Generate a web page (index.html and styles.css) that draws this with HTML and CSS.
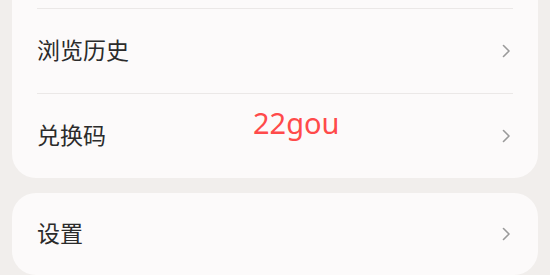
FILE: index.html
```html
<!DOCTYPE html>
<html lang="zh-CN">
<head>
<meta charset="utf-8">
<link rel="stylesheet" href="styles.css">
</head>
<body>
<div class="page">
  <div class="card card-top">
    <div class="row row-hidden"></div>
    <div class="divider"></div>
    <div class="row">
      <span class="label">浏览历史</span>
      <svg class="chev" viewBox="0 0 10 14" width="10" height="14"><path d="M2.5 1.5 L8 7 L2.5 12.5" fill="none" stroke="#9a9a9a" stroke-width="1.6" stroke-linecap="round" stroke-linejoin="round"/></svg>
    </div>
    <div class="divider"></div>
    <div class="row">
      <span class="label">兑换码</span>
      <svg class="chev" viewBox="0 0 10 14" width="10" height="14"><path d="M2.5 1.5 L8 7 L2.5 12.5" fill="none" stroke="#9a9a9a" stroke-width="1.6" stroke-linecap="round" stroke-linejoin="round"/></svg>
    </div>
  </div>
  <div class="card">
    <div class="row row-short">
      <span class="label">设置</span>
      <svg class="chev" viewBox="0 0 10 14" width="10" height="14"><path d="M2.5 1.5 L8 7 L2.5 12.5" fill="none" stroke="#9a9a9a" stroke-width="1.6" stroke-linecap="round" stroke-linejoin="round"/></svg>
    </div>
  </div>
  <div class="watermark">22gou</div>
</div>
</body>
</html>
```
FILE: styles.css
```css
html, body {
  margin: 0;
  padding: 0;
  background: #f1eeec;
  overflow: hidden;
}
.page {
  position: relative;
  width: 550px;
  height: 275px;
  padding: 0 12px;
  box-sizing: border-box;
  display: flex;
  flex-direction: column;
  gap: 15px;
  font-family: "Noto Sans CJK SC", "Noto Sans", sans-serif;
}
.card {
  background: #fcfafa;
  border-radius: 24px;
  padding: 0 25px;
  display: flex;
  flex-direction: column;
  flex-shrink: 0;
}
.card-top {
  margin-top: -76px;
}
.row {
  height: 84px;
  display: flex;
  align-items: center;
  justify-content: space-between;
}
.row-short {
  height: 82px;
}
.label {
  font-size: 23px;
  color: #2b2b2b;
  line-height: 1;
  margin-bottom: 3px;
}
.chev {
  margin-right: 2px;
  display: block;
}
.divider {
  height: 1px;
  background: #ebe8e7;
}
.watermark {
  position: absolute;
  left: 253px;
  top: 103px;
  font-family: "Noto Sans", sans-serif;
  font-size: 29px;
  line-height: 40px;
  color: #ff4a4a;
}
```
